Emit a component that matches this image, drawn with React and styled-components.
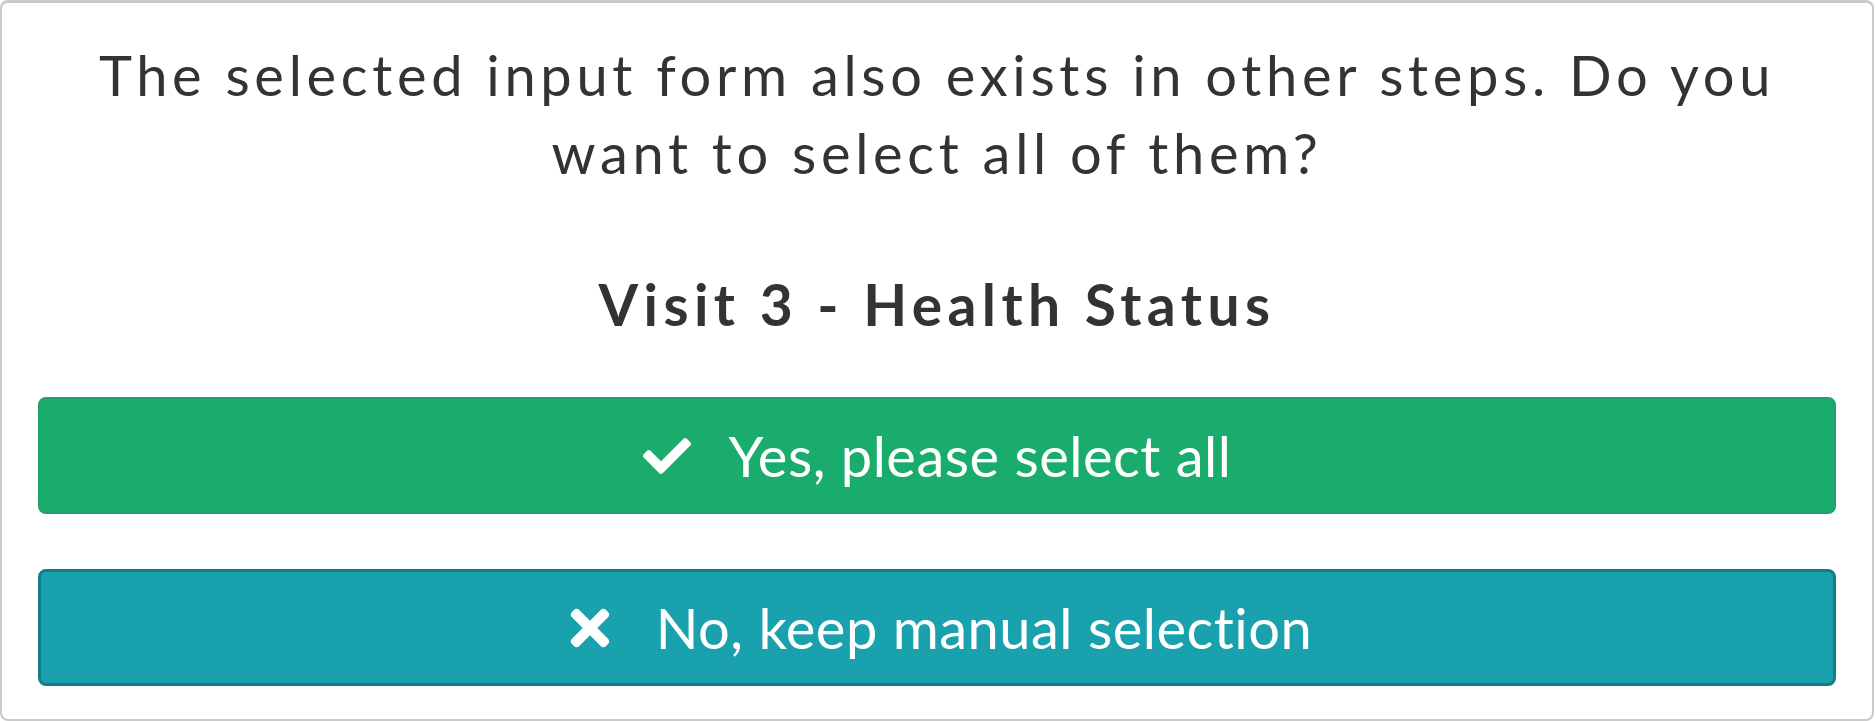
import React from "react";
import styled, { createGlobalStyle } from "styled-components";
import { FaCheck, FaTimes } from "react-icons/fa";

const GlobalStyle = createGlobalStyle`
  html, body {
    margin: 0;
    padding: 0;
    background: #ffffff;
  }
  body {
    font-family: Lato, "Noto Sans", sans-serif;
    color: #333333;
  }
  * {
    box-sizing: border-box;
  }
`;

const Card = styled.div`
  width: 1874px;
  height: 721px;
  border: 2px solid #cacaca;
  border-top-width: 3px;
  border-radius: 8px;
  background: #ffffff;
  padding: 33px 36px 0;
  display: flex;
  flex-direction: column;
`;

const Question = styled.p`
  margin: 0;
  font-size: 56px;
  line-height: 78px;
  letter-spacing: 4.7px;
  text-align: center;
  font-weight: 400;
`;

const FormName = styled.h3`
  margin: 73px 0 0;
  font-size: 57px;
  line-height: 78px;
  letter-spacing: 5.4px;
  text-align: center;
  font-weight: 700;
`;

const Actions = styled.div`
  margin-top: 54px;
  display: flex;
  flex-direction: column;
  gap: 55px;
`;

const Button = styled.button`
  width: 100%;
  height: 117px;
  display: flex;
  align-items: center;
  justify-content: center;
  gap: 38px;
  border-radius: 8px;
  border: ${(p) => p.$borderWidth}px solid ${(p) => p.$border};
  background: ${(p) => p.$bg};
  color: #ffffff;
  font-family: Lato, "Noto Sans", sans-serif;
  font-size: 56px;
  line-height: 78px;
  letter-spacing: 0.5px;
  font-weight: 400;
  cursor: pointer;
  padding: 0;

  svg {
    flex: none;
  }
`;

export default function App() {
  return (
    <>
      <GlobalStyle />
      <Card>
        <Question>
          The selected input form also exists in other steps. Do you
          <br />
          want to select all of them?
        </Question>
        <FormName>Visit 3 - Health Status</FormName>
        <Actions>
          <Button $bg="#1aac6c" $border="#23a06a" $borderWidth={2}>
            <FaCheck size={48} />
            <span>Yes, please select all</span>
          </Button>
          <Button $bg="#19a2ae" $border="#137e88" $borderWidth={3}>
            <FaTimes size={56} />
            <span>No, keep manual selection</span>
          </Button>
        </Actions>
      </Card>
    </>
  );
}
